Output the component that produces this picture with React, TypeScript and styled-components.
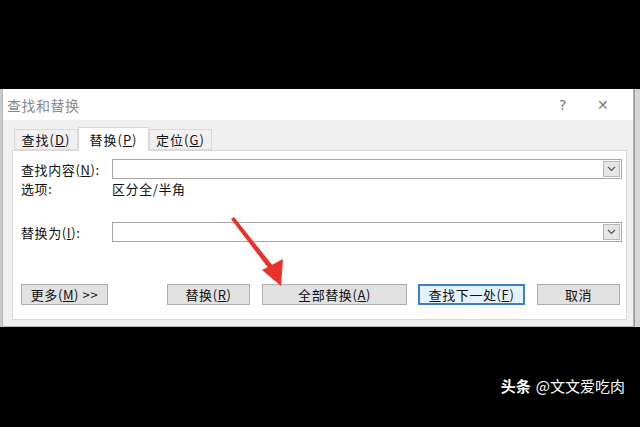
import { createGlobalStyle, styled } from "styled-components";

const Global = createGlobalStyle`
  html, body {
    margin: 0;
    padding: 0;
    background: #000;
  }
  body {
    font-family: "Noto Sans CJK SC", "DejaVu Sans", sans-serif;
  }
`;

const Page = styled.div`
  position: relative;
  width: 640px;
  height: 427px;
  background: #000;
  display: flex;
  flex-direction: column;
  overflow: hidden;
`;

const TopBand = styled.div`
  height: 89px;
  flex: none;
`;

const Middle = styled.div`
  height: 238px;
  flex: none;
  display: flex;
  background: #c9cdd2;
`;

const Dialog = styled.div`
  margin-left: 2px;
  width: 630px;
  border: 1px solid #b4b4b4;
  border-top: none;
  background: #f0f0f0;
  display: flex;
  flex-direction: column;
`;

const SideStrip = styled.div`
  flex: 1;
  background: #d6d6d6;
  border-left: 1px solid #9a9a9a;
`;

const TitleBar = styled.div`
  height: 31px;
  background: #fff;
  display: flex;
  align-items: center;
  padding-left: 4px;
  color: #8a8a8a;
  font-size: 14px;
  letter-spacing: 0.5px;
`;

const TitleText = styled.span`
  flex: 1;
`;

const TitleBtn = styled.span<{ $w: number }>`
  width: ${(p) => p.$w}px;
  text-align: center;
  color: #7a7a7a;
  font-size: 14px;
  font-family: "DejaVu Sans", sans-serif;
`;

const Body = styled.div`
  flex: 1;
  padding: 7px 6px 6px 9px;
  display: flex;
  flex-direction: column;
`;

const Tabs = styled.div`
  display: flex;
  height: 23px;
  align-items: flex-end;
  padding-left: 2px;
  position: relative;
  z-index: 1;
`;

const Tab = styled.div<{ $active?: boolean; $w: number }>`
  width: ${(p) => p.$w}px;
  height: ${(p) => (p.$active ? 24 : 21)}px;
  margin-bottom: ${(p) => (p.$active ? -1 : 0)}px;
  border: 1px solid #d9d9d9;
  border-bottom: ${(p) => (p.$active ? "none" : "1px solid #d9d9d9")};
  background: ${(p) => (p.$active ? "#fff" : "#f0f0f0")};
  font-size: 13px;
  letter-spacing: 1px;
  color: #111;
  display: flex;
  align-items: center;
  justify-content: center;
  box-sizing: border-box;
  flex: none;
`;

const Panel = styled.div`
  flex: 1;
  background: #fff;
  border: 1px solid #d9d9d9;
  padding: 8px 4px 0 8px;
  display: flex;
  flex-direction: column;
`;

const Row = styled.div<{ $h: number; $mt?: number }>`
  display: flex;
  align-items: center;
  height: ${(p) => p.$h}px;
  margin-top: ${(p) => p.$mt ?? 0}px;
  font-size: 13px;
  letter-spacing: 0.6px;
  color: #111;
`;

const Label = styled.span`
  width: 91px;
  flex: none;
`;

const Combo = styled.div`
  flex: 1;
  height: 20px;
  box-sizing: border-box;
  border: 1px solid #a8a8a8;
  background: #fff;
  display: flex;
  justify-content: flex-end;
  align-items: center;
  padding-right: 1px;
`;

const DropBtn = styled.div`
  width: 17px;
  height: 16px;
  box-sizing: border-box;
  border: 1px solid #b8b8b8;
  background: #e6e6e6;
  display: flex;
  align-items: center;
  justify-content: center;
`;

const Buttons = styled.div`
  display: flex;
  align-items: center;
  height: 21px;
  margin-top: 42px;
`;

const Btn = styled.div<{ $w: number; $ml: number; $focus?: boolean }>`
  width: ${(p) => p.$w}px;
  margin-left: ${(p) => p.$ml}px;
  height: 21px;
  box-sizing: border-box;
  border: ${(p) => (p.$focus ? "2px solid #3d7fc4" : "1px solid #adadad")};
  background: ${(p) => (p.$focus ? "#e5f1fb" : "#e1e1e1")};
  font-size: 13px;
  letter-spacing: 0.6px;
  color: #111;
  display: flex;
  align-items: center;
  justify-content: center;
  flex: none;
`;

const Bottom = styled.div`
  flex: 1;
  display: flex;
  justify-content: flex-end;
  align-items: center;
  padding: 0 15px 0 0;
`;

const Watermark = styled.div`
  color: #fff;
  font-size: 15px;
  display: flex;
  gap: 5px;
  margin-top: 17px;
`;

const Strong = styled.span`
  font-weight: 700;
`;

const Arrow = styled.svg`
  position: absolute;
  left: 0;
  top: 0;
  pointer-events: none;
`;

function Chevron() {
  return (
    <svg width="9" height="6" viewBox="0 0 9 6">
      <path d="M1 1 L4.5 4.5 L8 1" fill="none" stroke="#555" strokeWidth="1.2" />
    </svg>
  );
}

export default function App() {
  return (
    <Page>
      <Global />
      <TopBand />
      <Middle>
        <Dialog>
          <TitleBar>
            <TitleText>查找和替换</TitleText>
            <TitleBtn $w={20}>?</TitleBtn>
            <TitleBtn $w={60}>✕</TitleBtn>
          </TitleBar>
          <Body>
            <Tabs>
              <Tab $w={64}>查找(<u>D</u>)</Tab>
              <Tab $w={71} $active>替换(<u>P</u>)</Tab>
              <Tab $w={63}>定位(<u>G</u>)</Tab>
            </Tabs>
            <Panel>
              <Row $h={20}>
                <Label>查找内容(<u>N</u>):</Label>
                <Combo>
                  <DropBtn><Chevron /></DropBtn>
                </Combo>
              </Row>
              <Row $h={18} $mt={0}>
                <Label>选项:</Label>
                <span>区分全/半角</span>
              </Row>
              <Row $h={20} $mt={25}>
                <Label>替换为(<u>I</u>):</Label>
                <Combo>
                  <DropBtn><Chevron /></DropBtn>
                </Combo>
              </Row>
              <Buttons>
                <Btn $w={87} $ml={0}>更多(<u>M</u>)&nbsp;&gt;&gt;</Btn>
                <Btn $w={83} $ml={59}>替换(<u>R</u>)</Btn>
                <Btn $w={145} $ml={12}>全部替换(<u>A</u>)</Btn>
                <Btn $w={107} $ml={11} $focus>查找下一处(<u>F</u>)</Btn>
                <Btn $w={83} $ml={12}>取消</Btn>
              </Buttons>
            </Panel>
          </Body>
        </Dialog>
        <SideStrip />
      </Middle>
      <Bottom>
        <Watermark>
          <Strong>头条</Strong>
          <span>@文文爱吃肉</span>
        </Watermark>
      </Bottom>
      <Arrow width="640" height="427" viewBox="0 0 640 427">
        <polygon points="231,219 234,217 273,266 269,269" fill="#e8332c" />
        <polygon points="262,270 283,259 281,286" fill="#e8332c" />
      </Arrow>
    </Page>
  );
}
